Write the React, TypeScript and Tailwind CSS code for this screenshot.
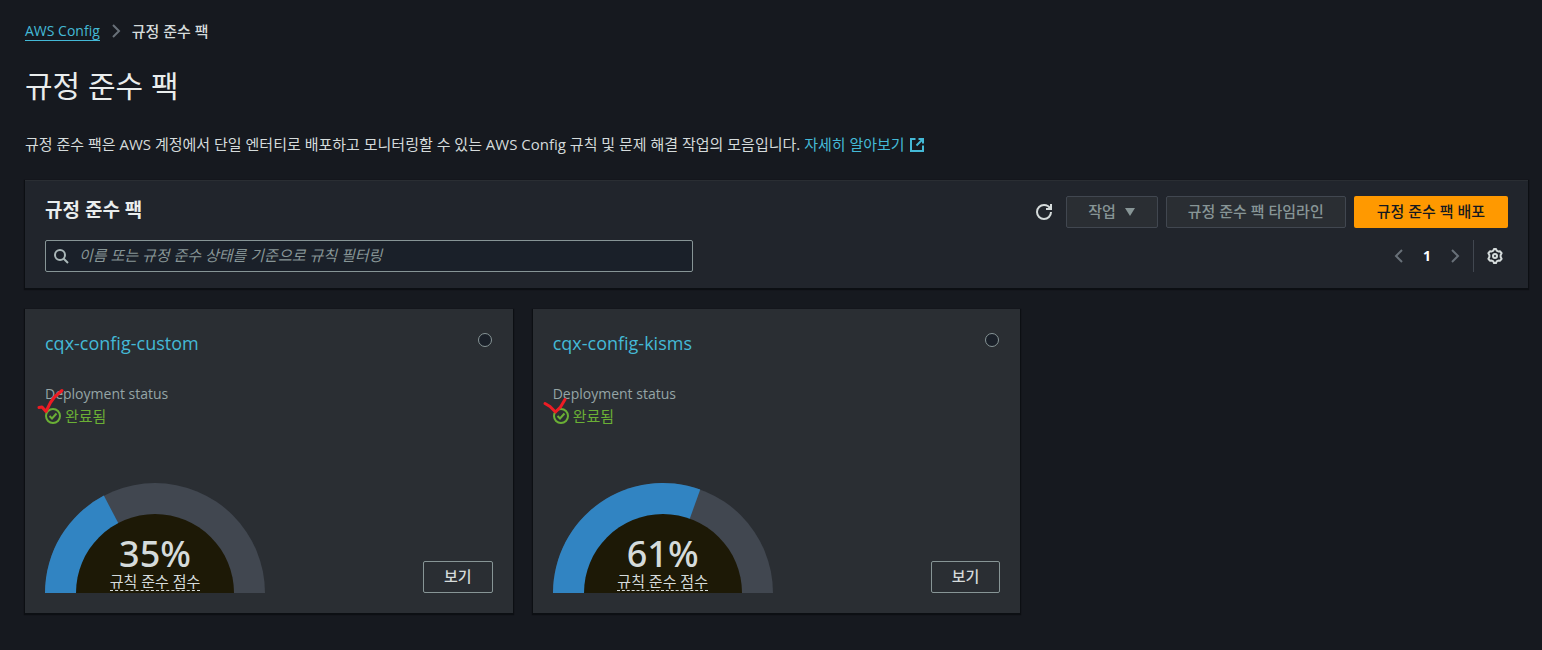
import type { ReactNode } from 'react';

type Pack = {
  name: string;
  score: number;
  mark: string;
};

const packs: Pack[] = [
  { name: 'cqx-config-custom', score: 34.6, mark: 'M2 20.500L5 20L9 24.500L13.500 15.500L17.500 10L25 3.500' },
  { name: 'cqx-config-kisms', score: 61, mark: 'M0 16.500L5 19.500L10.500 25L15.500 20L20 12.500' },
];

function Chevron({ left = false }: { left?: boolean }) {
  return (
    <svg className="size-4" viewBox="0 0 16 16" fill="none" stroke="currentColor" strokeWidth="2" aria-hidden="true">
      <path d={left ? 'M11 2L5 8L11 14' : 'M5 2L11 8L5 14'} />
    </svg>
  );
}

function RefreshIcon() {
  return (
    <svg className="size-4" viewBox="0 0 16 16" fill="none" stroke="currentColor" strokeWidth="2" aria-hidden="true">
      <path d="M10 5H15V0" />
      <path d="M15 8C15 11.860 11.860 15 8 15C4.140 15 1 11.860 1 8C1 4.140 4.140 1 8 1C10.790 1 13.300 2.640 14.400 5" />
    </svg>
  );
}

function SearchIcon() {
  return (
    <svg className="size-4" viewBox="0 0 16 16" fill="none" stroke="currentColor" strokeWidth="2" aria-hidden="true">
      <circle cx="7" cy="7" r="5" />
      <path d="M15 15L10.500 10.500" />
    </svg>
  );
}

function GearIcon() {
  return (
    <svg className="size-4" viewBox="0 0 16 16" fill="none" stroke="currentColor" strokeWidth="2" strokeLinejoin="round" aria-hidden="true">
      <path d="M6.300 2.600L7 1H9L9.700 2.600L11.300 3.500L13.100 3.300L14.600 5.200L13.600 7V9L14.600 10.800L13.100 12.700L11.300 12.500L9.700 13.400L9 15H7L6.300 13.400L4.700 12.500L2.900 12.700L1.400 10.800L2.400 9V7L1.400 5.200L2.900 3.300L4.700 3.500Z" />
      <circle cx="8" cy="8" r="2" />
    </svg>
  );
}

function ExternalIcon() {
  return (
    <svg className="inline-block size-4 align-[-3px]" viewBox="0 0 16 16" fill="none" stroke="currentColor" strokeWidth="2" aria-hidden="true">
      <path d="M14 8.500V14H2V2H6.500" />
      <path d="M9.500 2H14V6.500" />
      <path d="M7.500 8.500L14 2" />
    </svg>
  );
}

function SuccessIcon() {
  return (
    <svg className="size-4" viewBox="0 0 16 16" fill="none" stroke="currentColor" strokeWidth="2" aria-hidden="true">
      <circle cx="8" cy="8" r="7" />
      <path d="M4.500 8L7 10.500L11.500 5.500" />
    </svg>
  );
}

function Gauge({ score }: { score: number }) {
  const angle = Math.PI * (1 - score / 100);
  const x = 110 + 110 * Math.cos(angle);
  const y = 110 - 110 * Math.sin(angle);

  return (
    <div className="relative h-[110px] w-[220px]">
      <svg className="h-full w-full" viewBox="0 0 220 110" aria-hidden="true">
        <path d="M0 110A110 110 0 0 1 220 110Z" fill="#414750" />
        <path d={`M110 110L0 110A110 110 0 0 1 ${x} ${y}Z`} fill="#3184c2" />
        <path d="M31 110A79 79 0 0 1 189 110Z" fill="#1d1906" />
      </svg>
      <div className="absolute inset-x-0 bottom-0 flex flex-col items-center pb-[2px] text-[#d5dbdb]">
        <span className="font-['Noto_Sans',sans-serif] text-[36px] leading-[38px] font-medium">{Math.round(score)}%</span>
        <span className="border-b border-dashed border-[#d5dbdb] text-[15px] leading-[17px]">규칙 준수 점수</span>
      </div>
    </div>
  );
}

function OutlineButton({ children }: { children: ReactNode }) {
  return (
    <button type="button" disabled className="flex h-8 items-center gap-2 rounded-xs border border-[#414750] bg-[#2a2e33] px-[21px] text-[15px] font-medium text-[#879596]">
      {children}
    </button>
  );
}

function PackCard({ pack }: { pack: Pack }) {
  return (
    <li className="flex flex-col bg-[#2a2e33] p-5 shadow-[0_1px_1px_1px_#0c0f13]">
      <div className="flex items-start justify-between">
        <a href="#" className="mt-[3px] text-lg leading-[22px] font-medium text-[#44b9d6]">{pack.name}</a>
        <input
          type="radio"
          name="pack"
          aria-label={pack.name}
          className="mt-1 mr-px size-[14px] appearance-none rounded-full border border-[#879596] bg-[#1a2029] checked:border-4 checked:border-[#44b9d6]"
        />
      </div>
      <div className="relative mt-[29px] text-sm leading-[22px]">
        <div className="font-medium text-[#95a5a6]">Deployment status</div>
        <div className="flex items-center gap-1 text-[15px] text-[#6aaf35]">
          <SuccessIcon />
          완료됨
        </div>
        <svg className="absolute top-1 -left-2 h-6 w-7 overflow-visible" viewBox="0 0 28 24" fill="none" stroke="#ed1c24" strokeWidth="3" strokeLinecap="round" strokeLinejoin="round" aria-hidden="true">
          <path d={pack.mark} />
        </svg>
      </div>
      <div className="mt-[56px] flex items-end justify-between">
        <Gauge score={pack.score} />
        <button type="button" className="h-8 rounded-xs border border-[#879596] px-5 text-[15px] font-medium text-[#d5dbdb]">보기</button>
      </div>
    </li>
  );
}

export default function App() {
  return (
    <main className="min-h-screen bg-[#16191f] pt-5 pr-[14px] pb-9 pl-[25px] font-['Open_Sans','Noto_Sans_CJK_KR',sans-serif] text-sm text-[#d5dbdb]">
      <nav aria-label="breadcrumb" className="flex items-center gap-2 leading-[22px]">
        <a href="#" className="border-b border-[#44b9d6] leading-[19px] font-medium text-[#44b9d6]">AWS Config</a>
        <span className="text-[#687078]"><Chevron /></span>
        <span className="text-[15px] font-medium">규정 준수 팩</span>
      </nav>

      <h1 className="mt-6 text-[30px] leading-[40px] text-[#eaeded]">규정 준수 팩</h1>

      <p className="mt-[27px] text-[15px] leading-[22px]">
        규정 준수 팩은 AWS 계정에서 단일 엔터티로 배포하고 모니터링할 수 있는 AWS Config 규칙 및 문제 해결 작업의 모음입니다.{' '}
        <a href="#" className="text-[#44b9d6]">자세히 알아보기 <ExternalIcon /></a>
      </p>

      <section className="mt-[25px] border-t border-[#2a2e33] bg-[#21252c] px-5 pt-[15px] pb-4 shadow-[0_1px_1px_1px_#0c0f13]">
        <div className="flex items-start justify-between">
          <h2 className="text-[19px] leading-7 font-bold text-[#eaeded]">규정 준수 팩</h2>
          <div className="flex items-center gap-2">
            <button type="button" aria-label="새로 고침" className="mr-[6px] flex size-4 items-center justify-center">
              <RefreshIcon />
            </button>
            <OutlineButton>
              작업
              <svg className="h-2 w-3" viewBox="0 0 12 8" fill="currentColor" aria-hidden="true"><path d="M1 0H11L6 8Z" /></svg>
            </OutlineButton>
            <OutlineButton>규정 준수 팩 타임라인</OutlineButton>
            <button type="button" className="h-8 rounded-xs bg-[#ff9900] px-[23px] text-[15px] font-medium text-[#16191f]">규정 준수 팩 배포</button>
          </div>
        </div>
        <div className="mt-3 flex items-center justify-between">
          <label className="flex h-8 w-[648px] items-center gap-2 rounded-xs border border-[#879596] bg-[#1a2029] px-[7px] text-[#aab7b8]">
            <SearchIcon />
            <input
              type="text"
              aria-label="규칙 필터링"
              placeholder="이름 또는 규정 준수 상태를 기준으로 규칙 필터링"
              className="min-w-0 flex-1 bg-transparent pl-[2px] text-[15px] italic outline-none placeholder:text-[#879596]"
            />
          </label>
          <div className="flex items-center">
            <button type="button" aria-label="이전" disabled className="text-[#687078]"><Chevron left /></button>
            <button type="button" className="w-10 font-bold text-white">1</button>
            <button type="button" aria-label="다음" disabled className="text-[#687078]"><Chevron /></button>
            <span className="mr-[13px] ml-[10px] h-8 w-px bg-[#414750]" />
            <button type="button" aria-label="설정" className="mr-[5px]"><GearIcon /></button>
          </div>
        </div>
      </section>

      <ul className="mt-[21px] grid grid-cols-3 gap-5">
        {packs.map((pack) => (
          <PackCard key={pack.name} pack={pack} />
        ))}
      </ul>
    </main>
  );
}
